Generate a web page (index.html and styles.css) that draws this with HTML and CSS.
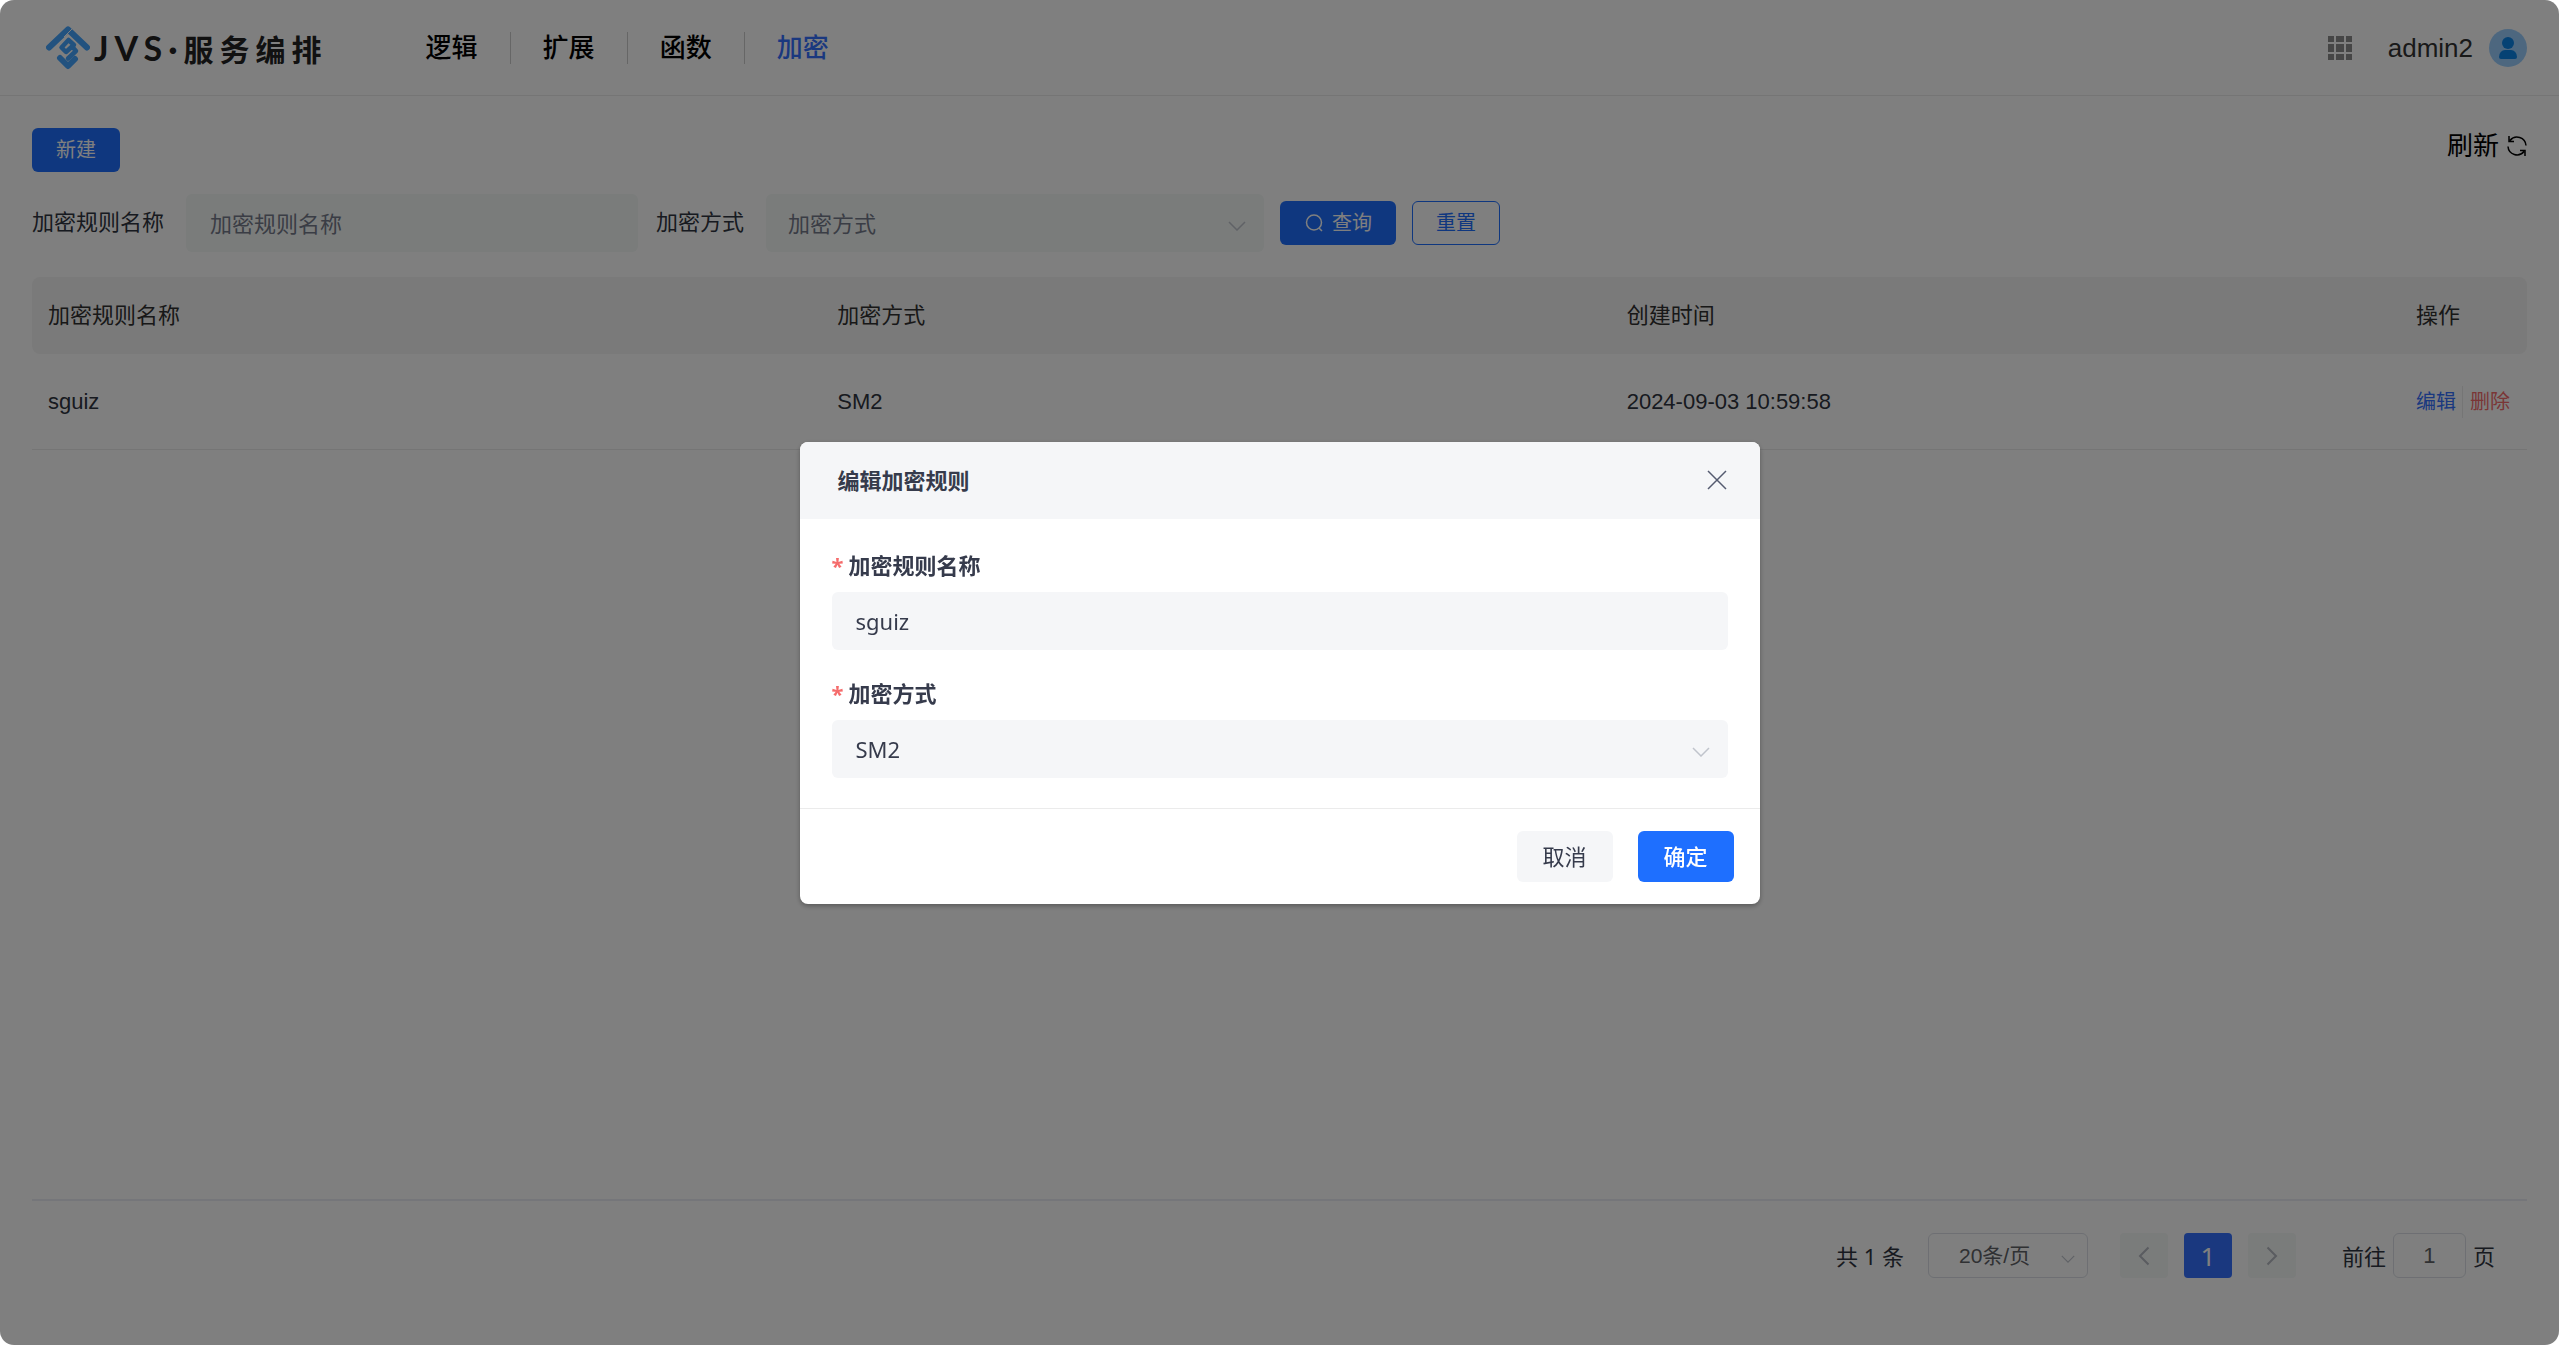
FILE: index.html
```html
<!DOCTYPE html>
<html lang="zh-CN">
<head>
<meta charset="utf-8">
<title>JVS·服务编排</title>
<link rel="stylesheet" href="styles.css">
</head>
<body>
<div class="page">
  <header class="topbar">
    <a class="brand" href="#">
      <svg class="brand-mark" viewBox="0 0 44 44" aria-hidden="true">
        <g fill="none" stroke-linejoin="round" stroke-linecap="round" stroke="#44a4ff">
          <path d="M3 21.500 22 3.500 41 21.500" stroke-width="6"/>
          <path d="M28 19 22.500 14 15.500 21.500 20 26 26 20.500 30 25 22 32.500" stroke-width="4.500"/>
          <path d="M14 32 22 40 29 33" stroke-width="6"/>
        </g>
        <path d="M18 11 26 3" stroke="#fff" stroke-width="1"/>
      </svg>
      <span class="brand-name"><span class="brand-latin">JVS·</span>服务编排</span>
    </a>
    <nav class="nav">
      <a href="#">逻辑</a>
      <a href="#">扩展</a>
      <a href="#">函数</a>
      <a href="#" class="active">加密</a>
    </nav>
    <div class="user">
      <svg class="apps" viewBox="0 0 24 24" fill="#8c8c8c" aria-hidden="true">
        <path d="M0 0h6v6H0zM8 0h8v6H8zM18 0h6v6h-6zM0 8h6v8H0zM8 8h8v8H8zM18 8h6v8h-6zM0 18h6v6H0zM8 18h8v6H8zM18 18h6v6h-6z"/>
      </svg>
      <span class="user-name">admin2</span>
      <svg class="avatar" viewBox="0 0 38 38" aria-hidden="true">
        <circle cx="19" cy="19" r="19" fill="#9bcfff"/>
        <circle cx="19" cy="14" r="6" fill="#0a84e8"/>
        <path d="M10 28a6 7 0 0 1 6-7h6a6 7 0 0 1 6 7q0 2-2 2H12q-2 0-2-2z" fill="#0a84e8"/>
      </svg>
    </div>
  </header>

  <main class="content">
    <div class="toolbar">
      <button type="button" class="btn btn-primary">新建</button>
      <button type="button" class="refresh">刷新
        <svg viewBox="0 0 20 20" fill="none" stroke="#000" stroke-width="1.500" aria-hidden="true">
          <path d="M3 4.500A9 9 0 0 1 19 9.500M17 15.500A9 9 0 0 1 1 10.500M2 0v5.500h5M18 20v-5.500h-5"/>
        </svg>
      </button>
    </div>

    <form class="search">
      <label for="q-name">加密规则名称</label>
      <input id="q-name" class="field q-name" type="text" placeholder="加密规则名称">
      <label for="q-type">加密方式</label>
      <span class="select-box q-type">
        <select id="q-type" class="field placeholder"><option>加密方式</option></select>
        <svg class="chevron" viewBox="0 0 18 10" aria-hidden="true"><path d="M1 1 9 9 17 1"/></svg>
      </span>
      <div class="search-actions">
        <button type="button" class="btn btn-primary btn-search">
          <svg viewBox="0 0 20 20" fill="none" stroke="#fff" stroke-width="1.500" aria-hidden="true"><circle cx="10" cy="9.500" r="7.500"/><path d="M15 15l3 3"/></svg>
          查询
        </button>
        <button type="button" class="btn btn-outline">重置</button>
      </div>
    </form>

    <table class="rules">
      <thead>
        <tr><th>加密规则名称</th><th>加密方式</th><th>创建时间</th><th class="ops">操作</th></tr>
      </thead>
      <tbody>
        <tr>
          <td>sguiz</td>
          <td>SM2</td>
          <td>2024-09-03 10:59:58</td>
          <td class="ops"><div class="row-ops"><a href="#" class="edit">编辑</a><a href="#" class="remove">删除</a></div></td>
        </tr>
      </tbody>
    </table>

    <footer class="pager">
      <span class="total">共 1 条</span>
      <span class="select-box page-size">
        <select aria-label="每页条数"><option>20条/页</option></select>
        <svg class="chevron" viewBox="0 0 18 10" aria-hidden="true"><path d="M1 1 9 9 17 1"/></svg>
      </span>
      <div class="pages">
        <button type="button" class="page-btn" aria-label="上一页"><svg viewBox="0 0 12 20" aria-hidden="true"><path d="M10.500 1.500 2 10l8.500 8.500"/></svg></button>
        <button type="button" class="page-btn current">1</button>
        <button type="button" class="page-btn" aria-label="下一页"><svg viewBox="0 0 12 20" aria-hidden="true"><path d="M1.500 1.500 10 10l-8.500 8.500"/></svg></button>
      </div>
      <div class="jump">
        <label for="jump">前往</label>
        <input id="jump" type="text" value="1">
        <span>页</span>
      </div>
    </footer>
  </main>
</div>

<div class="overlay">
  <section class="dialog" role="dialog" aria-labelledby="dialog-title">
    <header class="dialog-head">
      <h2 id="dialog-title">编辑加密规则</h2>
      <button type="button" class="close" aria-label="关闭"><svg viewBox="0 0 20 20" aria-hidden="true"><path d="M1 1 19 19M19 1 1 19"/></svg></button>
    </header>
    <form class="dialog-body">
      <label class="required" for="rule-name">加密规则名称</label>
      <input id="rule-name" class="field" type="text" value="sguiz">
      <label class="required" for="rule-type">加密方式</label>
      <span class="select-box">
        <select id="rule-type" class="field"><option>SM2</option></select>
        <svg class="chevron" viewBox="0 0 18 10" aria-hidden="true"><path d="M1 1 9 9 17 1"/></svg>
      </span>
    </form>
    <footer class="dialog-foot">
      <button type="button" class="dialog-btn">取消</button>
      <button type="button" class="dialog-btn confirm">确定</button>
    </footer>
  </section>
</div>
</body>
</html>
```

FILE: styles.css
```css
:root {
  --primary: #1e6fff;
  --link: #3471ff;
  --text: #363b4c;
  --arial: "Liberation Sans", "Noto Sans CJK SC", sans-serif;
  --ui: "Noto Sans", "Noto Sans CJK SC", sans-serif;
}

* { box-sizing: border-box; }

html, body { height: 100%; }

body {
  margin: 0;
  background: #fff;
  color: #2f3440;
  font: 22px/32px var(--arial);
}

a { text-decoration: none; color: inherit; }

button, input, select { font: inherit; color: inherit; margin: 0; }

button { cursor: pointer; border: 0; padding: 0; background: none; }

svg { display: block; flex: none; }

.page { min-height: 100%; display: flex; flex-direction: column; }

/* top bar */
.topbar {
  display: flex;
  align-items: center;
  height: 96px;
  padding: 0 32px 0 46px;
  border-bottom: 1px solid #ebebeb;
}

.brand { display: flex; align-items: center; }
.brand-mark { width: 44px; height: 44px; }
.brand-name {
  padding-left: 4px;
  color: #222;
  font: 700 30px/44px "Noto Sans CJK SC", sans-serif;
  letter-spacing: 6px;
}
.brand-latin { font-family: Lato, sans-serif; font-size: 34px; }

.nav {
  display: flex;
  margin-left: 66px;
  color: #000;
  font-size: 26px;
  font-weight: 500;
}
.nav a { padding: 0 32px; }
.nav a + a { border-left: 1px solid #ccc; }
.nav .active { color: var(--link); }

.user { display: flex; align-items: center; margin-left: auto; color: #333; font-size: 26px; }
.apps { width: 24px; height: 24px; }
.user-name { margin: 0 16px 0 36px; }
.avatar { width: 38px; height: 38px; }

/* content */
.content { flex: 1; display: flex; flex-direction: column; padding: 32px 32px 67px; }

.toolbar { display: flex; justify-content: space-between; align-items: flex-start; }

.btn {
  display: flex;
  align-items: center;
  height: 44px;
  padding: 0 24px;
  border-radius: 6px;
  font-size: 20px;
}
.btn-primary { background: var(--primary); color: #fff; }
.btn-outline { border: 1px solid var(--primary); color: var(--primary); padding: 0 23px; }
.btn-search { gap: 8px; }
.btn-search svg { width: 20px; height: 20px; }

.refresh { display: flex; align-items: center; gap: 8px; color: #000; font-size: 26px; line-height: 36px; }
.refresh svg { width: 20px; height: 20px; }

.search { display: flex; align-items: center; margin-top: 22px; }
.search label { margin-right: 22px; }

.field {
  width: 100%;
  height: 58px;
  padding: 0 24px;
  border: 0;
  border-radius: 6px;
  background: #f5f6f8;
  font-family: var(--ui);
}
.search .field { background: #f4f8f7; }
.search .q-name { width: 452px; margin-right: 18px; }
.search .q-type { width: 498px; }
.search .q-type .field { padding: 0 22px; }
.field::placeholder, .field.placeholder { color: #757a8a; opacity: 1; }
.search-actions { display: flex; gap: 16px; margin-left: 16px; }

.select-box { position: relative; display: block; }
.select-box select { appearance: none; width: 100%; }
.chevron {
  position: absolute;
  right: 18px;
  top: 50%;
  width: 18px;
  height: 10px;
  margin-top: -2px;
  fill: none;
  stroke: #c0c4cc;
  stroke-width: 1.500;
  pointer-events: none;
}

.rules {
  width: 100%;
  margin-top: 25px;
  border-collapse: separate;
  border-spacing: 0;
  table-layout: fixed;
}
.rules th, .rules td { padding: 0 16px; text-align: left; font-weight: 400; }
.rules th { height: 77px; background: #f5f5f5; color: #303030; }
.rules td { height: 96px; border-bottom: 1px solid #ebebeb; }
.rules th:first-child { border-radius: 8px 0 0 8px; }
.rules th:last-child { border-radius: 0 8px 8px 0; }
.rules .ops { width: 127px; padding-right: 0; }
.row-ops { display: flex; font-size: 20px; }
.edit { padding-right: 6px; color: var(--link); }
.remove { padding-left: 7px; border-left: 1px solid #ebebeb; color: #f56c6c; }

/* pagination */
.pager {
  display: flex;
  align-items: center;
  justify-content: flex-end;
  margin-top: auto;
  padding: 32px 32px 0 0;
  border-top: 2px solid #ebecf5;
  font-family: var(--ui);
}
.page-size { margin: 0 32px 0 24px; font-family: var(--arial); }
.page-size select {
  width: 160px;
  height: 45px;
  padding: 0 30px;
  border: 1px solid #dcdfe6;
  border-radius: 6px;
  background: #fff;
  color: #606266;
  font-size: 21px;
}
.page-size .chevron { right: 13px; width: 14px; }
.pages { display: flex; gap: 16px; }
.page-btn {
  display: grid;
  place-items: center;
  width: 48px;
  height: 45px;
  border-radius: 4px;
  background: #f4f8f7;
  font-size: 26px;
}
.page-btn.current { background: var(--link); color: #fff; }
.page-btn svg { width: 12px; height: 20px; fill: none; stroke: #b4b8c0; stroke-width: 2; }
.jump { display: flex; align-items: center; gap: 7px; margin-left: 46px; }
.jump input {
  width: 73px;
  height: 45px;
  border: 1px solid #dcdfe6;
  border-radius: 6px;
  background: #fff;
  color: #606266;
  font-family: var(--arial);
  text-align: center;
}

/* modal */
.overlay {
  position: fixed;
  inset: 0;
  display: grid;
  place-items: center;
  border-radius: 14px;
  background: rgba(0, 0, 0, .5);
}
.dialog {
  width: 960px;
  max-width: 90%;
  overflow: hidden;
  border-radius: 8px;
  background: #fff;
  box-shadow: 0 2px 5px rgba(0, 0, 0, .3);
  color: var(--text);
  font-family: var(--ui);
}
.dialog-head {
  display: flex;
  align-items: center;
  justify-content: space-between;
  height: 77px;
  padding: 0 33px 0 38px;
  background: #f5f6f8;
}
.dialog-head h2 { margin: 0; font-size: 22px; }
.close svg { width: 20px; height: 20px; fill: none; stroke: #555b70; stroke-width: 1.500; }
.dialog-body { display: flex; flex-direction: column; padding: 30px 32px; }
.dialog-body label { margin-bottom: 11px; font-weight: 700; }
.dialog-body .field + label { margin-top: 27px; }
.required::before { content: "*"; margin-right: 5px; color: #f56c6c; }
.dialog-foot {
  display: flex;
  justify-content: flex-end;
  gap: 25px;
  padding: 22px 26px;
  border-top: 1px solid #ebebeb;
}
.dialog-btn { width: 96px; height: 51px; border-radius: 6px; background: #f5f6f8; }
.dialog-btn.confirm { background: var(--primary); color: #fff; font-weight: 500; }
```
